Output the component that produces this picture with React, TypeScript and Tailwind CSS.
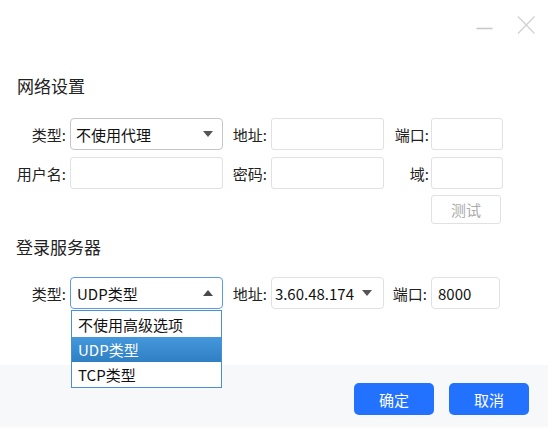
import React from "react";

function Caret({ up = false }: { up?: boolean }) {
  return (
    <svg width="10" height="6" viewBox="0 0 10 6" className="shrink-0">
      {up ? <path d="M0 6 L5 0 L10 6 Z" fill="#4a4a4a" /> : <path d="M0 0 L10 0 L5 6 Z" fill="#555" />}
    </svg>
  );
}

function Field({ w, value, border = "border-[#dfe1e5]" }: { w: string; value?: string; border?: string }) {
  return (
    <div className={`${w} h-[32px] border ${border} rounded-[3px] bg-white flex items-center px-[7px] text-[#111]`}>
      {value}
    </div>
  );
}

export default function App() {
  return (
    <div className="w-[548px] h-[428px] bg-white flex flex-col overflow-hidden text-[15px] text-[#222] font-['Noto_Sans_CJK_SC','Noto_Sans',sans-serif] leading-none">
      {/* window controls */}
      <div className="h-[50px] flex items-start justify-end pt-[16px] pr-[13px] gap-[24px] shrink-0">
        <svg width="17" height="18" viewBox="0 0 17 18">
          <line x1="0.5" y1="12.5" x2="16.5" y2="12.5" stroke="#c8c8c8" strokeWidth="1.6" />
        </svg>
        <svg width="18" height="18" viewBox="0 0 18 18">
          <path d="M1 0.5 L17.5 17.5 M17.5 0.5 L1 17.5" stroke="#d2d2d2" strokeWidth="1.3" fill="none" />
        </svg>
      </div>

      <div className="mt-[23px] h-[24px] flex items-center pl-[17px] text-[17px] text-[#222]">网络设置</div>

      {/* row 1 */}
      <div className="mt-[21px] h-[32px] flex items-center pl-[16px]">
        <div className="w-[50px] text-right">类型:</div>
        <div className="ml-[4px] w-[153px] h-[32px] border border-[#c6c6c6] rounded-[4px] flex items-center pl-[5px] pr-[9px] text-[#111]">
          <span className="flex-1">不使用代理</span>
          <Caret />
        </div>
        <div className="w-[44px] text-right">地址:</div>
        <div className="ml-[4px]"><Field w="w-[113px]" /></div>
        <div className="w-[45px] text-right">端口:</div>
        <div className="ml-[2px]"><Field w="w-[72px]" /></div>
      </div>

      {/* row 2 */}
      <div className="mt-[7px] h-[32px] flex items-center pl-[16px]">
        <div className="w-[50px] text-right">用户名:</div>
        <div className="ml-[4px]"><Field w="w-[153px]" /></div>
        <div className="w-[44px] text-right">密码:</div>
        <div className="ml-[4px]"><Field w="w-[113px]" /></div>
        <div className="w-[45px] text-right">域:</div>
        <div className="ml-[2px]"><Field w="w-[72px]" /></div>
      </div>

      <div className="mt-[6px] flex pl-[431px]">
        <div className="w-[70px] h-[29px] border border-[#e1e1e1] rounded-[3px] flex items-center justify-center text-[#ababab]">
          测试
        </div>
      </div>

      <div className="mt-[10px] h-[24px] flex items-center pl-[16px] text-[17px] text-[#222]">登录服务器</div>

      {/* row 3 */}
      <div className="mt-[19px] h-[32px] flex items-center pl-[16px] shrink-0">
        <div className="w-[50px] text-right">类型:</div>
        <div className="ml-[4px] relative z-10">
          <div className="w-[153px] h-[32px] border border-[#5a9be3] rounded-[4px] bg-white flex items-center pl-[6px] pr-[9px] text-[#111]">
            <span className="flex-1">UDP类型</span>
            <Caret up />
          </div>
          <div className="absolute left-[1px] top-[33px] w-[151px] border border-[#4a8ed6] bg-white text-[#111]">
            <div className="h-[26px] flex items-center pl-[6px]">不使用高级选项</div>
            <div className="h-[25px] flex items-center pl-[6px] text-white bg-gradient-to-b from-[#4598dc] to-[#2f7fc3]">
              UDP类型
            </div>
            <div className="h-[25px] flex items-center pl-[6px]">TCP类型</div>
          </div>
        </div>
        <div className="w-[44px] text-right">地址:</div>
        <div className="ml-[4px] w-[113px] h-[32px] border border-[#dfe1e5] rounded-[4px] flex items-center pr-[11px] text-[#111]">
          <div className="flex-1 overflow-hidden flex justify-end whitespace-nowrap pr-[8px] pl-[1px]">3.60.48.174</div>
          <Caret />
        </div>
        <div className="w-[43px] text-right">端口:</div>
        <div className="ml-[4px]">
          <div className="w-[69px] h-[32px] border border-[#dfe1e5] rounded-[4px] flex items-center pl-[6px] text-[#111]">8000</div>
        </div>
      </div>

      {/* footer */}
      <div className="mt-[56px] flex-1 bg-[#f7f8fa] flex justify-end items-start pt-[18px] pr-[19px] gap-[15px] border-b-[2px] border-[#fbfbfc]">
        <button className="w-[80px] h-[32px] rounded-[5px] bg-[#2271ff] text-white text-[15px]">确定</button>
        <button className="w-[80px] h-[32px] rounded-[5px] bg-[#2271ff] text-white text-[15px]">取消</button>
      </div>
    </div>
  );
}
